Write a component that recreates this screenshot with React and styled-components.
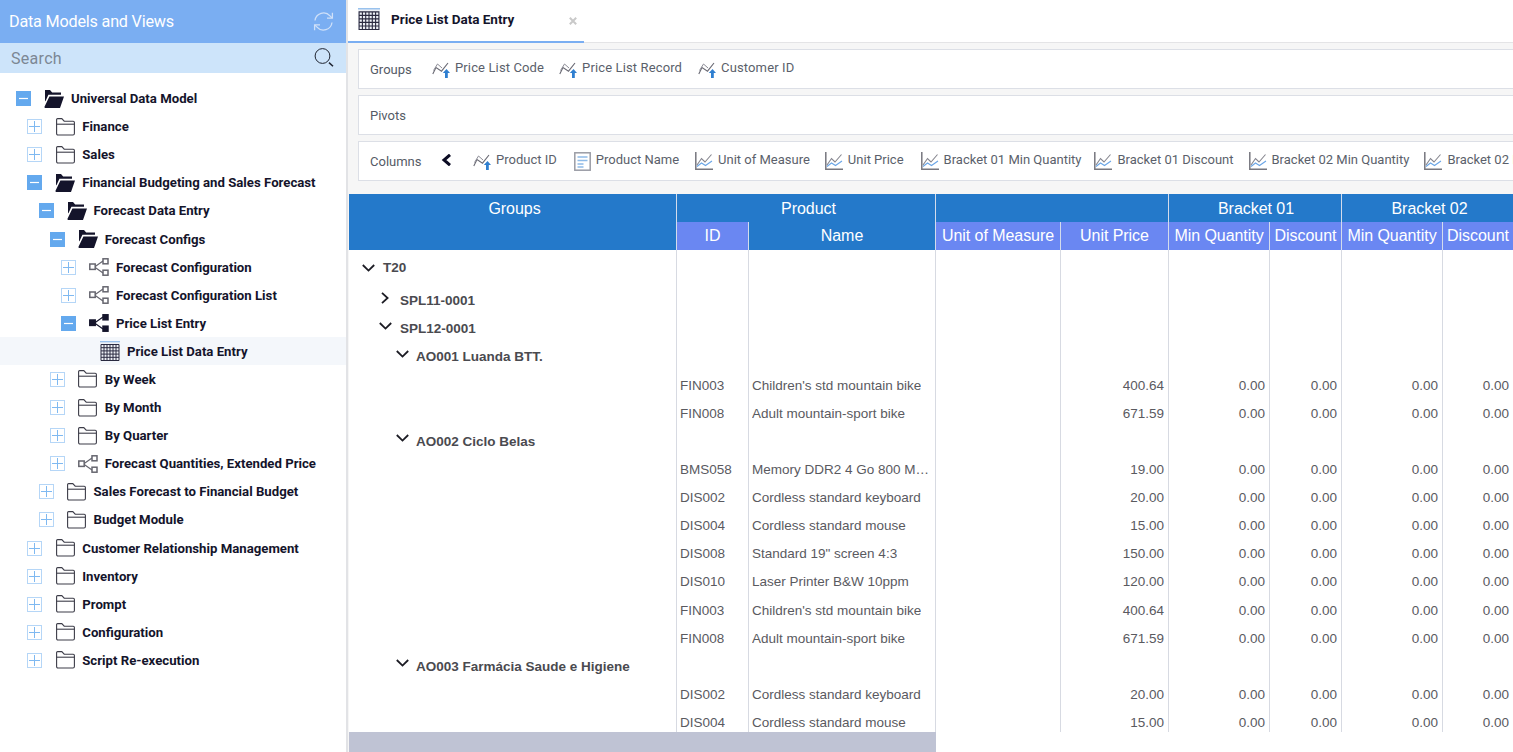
import styled, { createGlobalStyle } from 'styled-components'

const UI_FONT = `Roboto, "Liberation Sans", sans-serif`
const GRID_FONT = `"Liberation Sans", Arial, sans-serif`
const COLS = '327px 72px 187px 125px 108px 101px 72px 101px 71px'

const Global = createGlobalStyle`
  html, body { margin:0; padding:0; height:100%; overflow:hidden; background:#fff; }
  #root { height:100%; }
  * { box-sizing:border-box; }
`

/* ── Layout ── */
const Page    = styled.div`display:flex;width:1513px;height:752px;overflow:hidden;font-family:${UI_FONT};`
const Sidebar = styled.aside`width:348px;flex:none;display:flex;flex-direction:column;border-right:2px solid #e2e3e6;background:#fff;`
const Main    = styled.main`flex:1;min-width:0;display:flex;flex-direction:column;overflow:hidden;background:#f6f6f6;`

/* ── Sidebar ── */
const SideHead  = styled.div`height:43px;flex:none;display:flex;align-items:center;justify-content:space-between;padding:0 12px 1px 9px;background:#7aaef2;color:#fff;font-size:16.2px;letter-spacing:-.2px;`
const SearchBar = styled.div`height:30px;flex:none;display:flex;align-items:center;justify-content:space-between;padding:0 12px 0 11px;background:#cde4fa;`
const SearchBox = styled.input`border:0;outline:0;background:none;padding:0;width:200px;font:400 16px ${UI_FONT};letter-spacing:.3px;color:#7c8794;&::placeholder{color:#7c8794;opacity:1;}`
const Tree      = styled.div`padding-top:11.5px;display:flex;flex-direction:column;`
const TreeRow   = styled.div`
  height:28.1px;flex:none;display:flex;align-items:center;
  padding-left:${({ $level }) => 16 + $level * 11.25}px;
  background:${({ $active }) => $active ? '#f4f7fb' : 'transparent'};
`
const Toggle    = styled.span`
  width:15px;height:15px;flex:none;display:flex;align-items:center;justify-content:center;
  background:${({ $open }) => $open ? '#64a9ee' : '#fff'};
  border:${({ $open }) => $open ? '0' : '1.5px solid #b5d6f7'};
  margin-right:13px;
`
const NodeIcon  = styled.span`width:20px;height:20px;flex:none;display:flex;align-items:center;justify-content:center;margin-right:7px;`
const NodeLabel = styled.span`font-size:13.2px;font-weight:700;color:#14142b;white-space:nowrap;`

/* ── Tabs ── */
const TabBar   = styled.div`height:43px;flex:none;display:flex;background:#fff;border-bottom:1px solid #e4e4e6;`
const Tab      = styled.div`width:236px;height:43px;flex:none;display:flex;align-items:center;padding:0 0 3px 10px;border-bottom:2px solid #7aaef2;`
const TabTitle = styled.span`margin-left:11px;font-size:13.5px;font-weight:700;color:#14142b;`
const TabClose = styled.span`display:flex;margin-left:auto;margin-right:7px;padding-top:3px;`

/* ── Drop zones ── */
const Zones     = styled.div`flex:none;display:flex;flex-direction:column;gap:6px;padding:6px 0 13px 10px;`
const Zone      = styled.div`width:1200px;height:40px;display:flex;align-items:center;padding-left:11px;background:#fff;border:1px solid #dcdfe6;overflow:hidden;`
const ZoneLabel = styled.span`font-size:13px;color:#555b66;flex:none;width:${({ $w }) => $w}px;padding-top:1px;`
const Pill      = styled.span`display:flex;align-items:center;flex:none;margin-right:${({ $gap }) => $gap}px;font-size:13px;color:#5b5f6b;white-space:nowrap;letter-spacing:${({ $spaced }) => $spaced ? '.13px' : '0'};`
const PillText  = styled.span`margin-left:5px;position:relative;top:-2px;`
const Back      = styled.span`display:flex;flex:none;width:32px;margin-top:-3px;`

/* ── Grid ── */
const GridWrap  = styled.div`flex:1;min-height:0;display:flex;flex-direction:column;margin-left:1px;background:#fff;font-family:${GRID_FONT};`
const GridHead  = styled.div`flex:none;display:grid;grid-template-columns:${COLS};grid-template-rows:28px 28px;`
const HeadCell  = styled.div`
  grid-column:${({ $col }) => $col};
  grid-row:${({ $row }) => $row};
  display:flex;justify-content:center;align-items:${({ $top }) => $top ? 'flex-start' : 'center'};
  padding-top:${({ $top, $row }) => $top ? 6 : $row === '1' ? 1 : 0}px;
  padding-left:${({ $nudge }) => $nudge || 0}px;
  background:${({ $light }) => $light ? '#6a87f2' : '#2479ca'};
  border-left:${({ $first }) => $first ? '0' : '1px solid #d3dcec'};
  color:#fff;font-size:16px;letter-spacing:-.05px;white-space:nowrap;overflow:hidden;
`
const GridBody  = styled.div`flex:1;min-height:0;overflow:hidden;background:#fff;`
const Row       = styled.div`display:grid;grid-template-columns:${COLS};height:${({ $h }) => $h || 28.13}px;`
const GroupCell = styled.div`
  display:flex;align-items:center;min-width:0;white-space:nowrap;
  padding-left:${({ $indent }) => $indent}px;padding-bottom:${({ $pb }) => $pb || 0}px;
  font-size:13.5px;font-weight:700;color:#4a4a4f;
`
const Caret     = styled.span`display:flex;width:${({ $w }) => $w}px;flex:none;margin-top:${({ $raise }) => $raise ? -6 : 0}px;`
const Cell      = styled.div`
  display:flex;align-items:center;min-width:0;padding:0 ${({ $num }) => $num ? 4 : 2}px 0 3px;
  justify-content:${({ $num }) => $num ? 'flex-end' : 'flex-start'};
  border-left:1px solid #d7dae2;font-size:13.5px;color:#5a5a5f;
`
const CellText  = styled.span`display:block;white-space:nowrap;overflow:hidden;text-overflow:ellipsis;`
const ScrollBar = styled.div`flex:none;height:20px;background:#fff;`
const Thumb     = styled.div`width:587px;height:100%;background:#bfc3d4;`

/* ── Icons ── */
const Plus = () => (
  <svg width="11" height="11" viewBox="0 0 11 11"><path d="M5.5 0v11M0 5.5h11" stroke="#7fb9f1" strokeWidth="1" /></svg>
)
const Minus = () => (
  <svg width="9" height="3" viewBox="0 0 9 3"><path d="M0 1.5h9" stroke="#fff" strokeWidth="1.2" /></svg>
)
const FolderClosed = () => (
  <svg width="19" height="18" viewBox="0 0 19 18" fill="none" stroke="#3c3c48" strokeWidth="1.1">
    <path d="M.6 15.4V1.6c0-.6.4-1 1-1h4.2l2.4 2.6h9c.7 0 1.2.5 1.2 1.2v11c0 1-.6 1.6-1.4 1.6H2c-.9 0-1.4-.6-1.4-1.6z" />
    <path d="M.6 6.2h17.8" />
  </svg>
)
const FolderOpen = () => (
  <svg width="20" height="18" viewBox="0 0 20 18" fill="#14142b">
    <path d="M1 0h5l2.2 2.6H17v2.2H4.4L1.8 10.4 1 11.4z" />
    <path d="M5.4 6.4H20l-3.8 11c-.1.4-.4.6-.8.6H1.2C.6 18 .3 17.4.5 16.8z" />
  </svg>
)
const Nodes = ({ filled }) => {
  const c = filled ? '#14142b' : '#66666f'
  const fill = filled ? '#14142b' : '#fff'
  return (
    <svg width="20" height="18" viewBox="0 0 20 18" fill={fill} stroke={c} strokeWidth="1.5">
      <path d="M5.5 9 14 3M5.5 9 14 15" fill="none" strokeWidth="1.2" />
      <rect x=".8" y="6" width="5.4" height="5.4" />
      <rect x="14" y=".8" width="5" height="5" />
      <rect x="14" y="12.2" width="5" height="5" />
    </svg>
  )
}
const GridIcon = ({ size = 20 }) => (
  <svg width={size} height={size} viewBox="0 0 20 20" fill="none">
    <rect x="0" y="0" width="20" height="20" fill="#eef1f6" />
    <path d="M0 .7h20" stroke="#8fbcec" strokeWidth="1.2" />
    <path d="M1 3.5h18v16H1zM1 6.7h18M1 9.9h18M1 13.1h18M1 16.3h18M4 3.5v16M7 3.5v16M10 3.5v16M13 3.5v16M16 3.5v16" stroke="#2a2a40" strokeWidth="1" />
  </svg>
)
const Refresh = () => (
  <svg width="21" height="21" viewBox="0 0 21 21" fill="none" stroke="#cfe0f8" strokeWidth="1.3">
    <path d="M2 9.5a8.6 8.6 0 0 1 15-4.6l2 2" />
    <path d="M19.4 1.8v5.4h-5.4" />
    <path d="M19 11.5a8.6 8.6 0 0 1-15 4.6l-2-2" />
    <path d="M1.6 19.2v-5.4H7" />
  </svg>
)
const Magnifier = () => (
  <svg width="20" height="20" viewBox="0 0 20 20" fill="none" stroke="#1e2330" strokeWidth="1">
    <circle cx="8.5" cy="8" r="7.4" />
    <path d="M15 14.6l4 3.6" strokeWidth="1.5" />
  </svg>
)
const CloseX = () => (
  <svg width="8" height="8" viewBox="0 0 8 8"><path d="M.8.8l6.4 6.4M7.2.8.8 7.2" stroke="#c9c9c9" strokeWidth="2" /></svg>
)
const KeyField = () => (
  <svg width="18" height="18" viewBox="0 0 18 18" fill="none">
    <path d="M.8 14 4 7.5l5.5 3.7L16 3" stroke="#6a6a74" strokeWidth="1.1" />
    <path d="M1.5 10.5 5.5 4l4.5 4" stroke="#8c8c96" strokeWidth="1" />
    <path d="M14.5 9l3.5 4h-2.2v5h-2.8v-5H10.8z" fill="#2f7fd0" />
  </svg>
)
const DocField = () => (
  <svg width="17" height="19" viewBox="0 0 17 19" fill="none">
    <rect x=".8" y=".8" width="15.4" height="17.4" fill="#fff" stroke="#9a9ca5" strokeWidth="1.5" />
    <path d="M3.5 5h10M3.5 8.5h10M3.5 12h6M3.5 15h6" stroke="#8ebbe8" strokeWidth="1.4" />
  </svg>
)
const MeasureField = () => (
  <svg width="18" height="18" viewBox="0 0 18 18" fill="none">
    <path d="M.8 0v17.2H18" stroke="#77777f" strokeWidth="1.5" />
    <path d="M2 13l4.5-6.5 3.5 3.5L16.5 2.5" stroke="#85858e" strokeWidth="1.1" />
    <path d="M2 14.5l4.5-3.5 4 2.5 6.5-4.5" stroke="#6aa5e6" strokeWidth="1.1" />
  </svg>
)
const BackArrow = () => (
  <svg width="11" height="12" viewBox="0 0 11 12"><path d="M9 .8 3 6l6 5.2" fill="none" stroke="#0c0c24" strokeWidth="3" /></svg>
)
const CaretDown = () => (
  <svg width="13" height="8" viewBox="0 0 13 8"><path d="M.8 1l5.7 5.6L12.2 1" fill="none" stroke="#1c1c24" strokeWidth="1.8" /></svg>
)
const CaretRight = () => (
  <svg width="8" height="12" viewBox="0 0 8 12"><path d="M1 .8l5.6 5.2L1 11.2" fill="none" stroke="#1c1c24" strokeWidth="1.8" /></svg>
)

/* ── Data ── */
const tree = [
  { level:0, icon:'open', toggle:'open', label:'Universal Data Model' },
  { level:1, icon:'folder', toggle:'plus', label:'Finance' },
  { level:1, icon:'folder', toggle:'plus', label:'Sales' },
  { level:1, icon:'open', toggle:'open', label:'Financial Budgeting and Sales Forecast' },
  { level:2, icon:'open', toggle:'open', label:'Forecast Data Entry' },
  { level:3, icon:'open', toggle:'open', label:'Forecast Configs' },
  { level:4, icon:'nodes', toggle:'plus', label:'Forecast Configuration' },
  { level:4, icon:'nodes', toggle:'plus', label:'Forecast Configuration List' },
  { level:4, icon:'nodesFilled', toggle:'open', label:'Price List Entry' },
  { level:7.47, icon:'grid', label:'Price List Data Entry', active:true },
  { level:3, icon:'folder', toggle:'plus', label:'By Week' },
  { level:3, icon:'folder', toggle:'plus', label:'By Month' },
  { level:3, icon:'folder', toggle:'plus', label:'By Quarter' },
  { level:3, icon:'nodes', toggle:'plus', label:'Forecast Quantities, Extended Price' },
  { level:2, icon:'folder', toggle:'plus', label:'Sales Forecast to Financial Budget' },
  { level:2, icon:'folder', toggle:'plus', label:'Budget Module' },
  { level:1, icon:'folder', toggle:'plus', label:'Customer Relationship Management' },
  { level:1, icon:'folder', toggle:'plus', label:'Inventory' },
  { level:1, icon:'folder', toggle:'plus', label:'Prompt' },
  { level:1, icon:'folder', toggle:'plus', label:'Configuration' },
  { level:1, icon:'folder', toggle:'plus', label:'Script Re-execution' },
]

const treeIcons = {
  open: <FolderOpen />,
  folder: <FolderClosed />,
  nodes: <Nodes />,
  nodesFilled: <Nodes filled />,
  grid: <GridIcon />,
}

const fieldIcons = { key:<KeyField />, doc:<DocField />, measure:<MeasureField /> }

const groupFields = [
  { icon:'key', label:'Price List Code', gap:15, spaced:true },
  { icon:'key', label:'Price List Record', gap:16, spaced:true },
  { icon:'key', label:'Customer ID', gap:15, spaced:true },
]

const columnFields = [
  { icon:'key', label:'Product ID', gap:17 },
  { icon:'doc', label:'Product Name', gap:16 },
  { icon:'measure', label:'Unit of Measure', gap:15 },
  { icon:'measure', label:'Unit Price', gap:17 },
  { icon:'measure', label:'Bracket 01 Min Quantity', gap:13 },
  { icon:'measure', label:'Bracket 01 Discount', gap:15 },
  { icon:'measure', label:'Bracket 02 Min Quantity', gap:15 },
  { icon:'measure', label:'Bracket 02 Discount', gap:15 },
]

const bike = ['FIN003', "Children's std mountain bike", '400.64']
const sport = ['FIN008', 'Adult mountain-sport bike', '671.59']
const keyboard = ['DIS002', 'Cordless standard keyboard', '20.00']
const mouse = ['DIS004', 'Cordless standard mouse', '15.00']

const rows = [
  { group:'SPL11-0001', indent:32, caret:'right', w:19 },
  { group:'SPL12-0001', indent:30, caret:'down', w:21 },
  { group:'AO001 Luanda BTT.', indent:47, caret:'down', w:20 },
  bike, sport,
  { group:'AO002 Ciclo Belas', indent:47, caret:'down', w:20 },
  ['BMS058', 'Memory DDR2 4 Go 800 MHz CL5', '19.00'],
  keyboard, mouse,
  ['DIS008', 'Standard 19" screen 4:3', '150.00'],
  ['DIS010', 'Laser Printer B&W 10ppm', '120.00'],
  bike, sport,
  { group:'AO003 Farmácia Saude e Higiene', indent:47, caret:'down', w:20 },
  keyboard, mouse,
]

const Blanks = ({ n }) => Array.from({ length:n }, (_, i) => <Cell key={i} />)

const Field = ({ icon, label, gap, spaced }) => (
  <Pill $gap={gap} $spaced={spaced}>
    {fieldIcons[icon]}
    <PillText>{label}</PillText>
  </Pill>
)

const App = () => (
  <Page>
    <Global />

    {/* Left tree */}
    <Sidebar>
      <SideHead>
        Data Models and Views
        <Refresh />
      </SideHead>
      <SearchBar>
        <SearchBox placeholder="Search" />
        <Magnifier />
      </SearchBar>
      <Tree>
        {tree.map((n) => (
          <TreeRow key={n.label} $level={n.level} $active={n.active}>
            {n.toggle && (
              <Toggle $open={n.toggle === 'open'}>
                {n.toggle === 'open' ? <Minus /> : <Plus />}
              </Toggle>
            )}
            <NodeIcon>{treeIcons[n.icon]}</NodeIcon>
            <NodeLabel>{n.label}</NodeLabel>
          </TreeRow>
        ))}
      </Tree>
    </Sidebar>

    <Main>
      {/* Tab strip */}
      <TabBar>
        <Tab>
          <GridIcon size={22} />
          <TabTitle>Price List Data Entry</TabTitle>
          <TabClose><CloseX /></TabClose>
        </Tab>
      </TabBar>

      {/* Drop zones */}
      <Zones>
        <Zone>
          <ZoneLabel $w={62}>Groups</ZoneLabel>
          {groupFields.map((f) => <Field key={f.label} {...f} />)}
        </Zone>
        <Zone>
          <ZoneLabel $w={62}>Pivots</ZoneLabel>
        </Zone>
        <Zone>
          <ZoneLabel $w={71}>Columns</ZoneLabel>
          <Back><BackArrow /></Back>
          {columnFields.map((f) => <Field key={f.label} {...f} />)}
        </Zone>
      </Zones>

      {/* Data grid */}
      <GridWrap>
        <GridHead>
          <HeadCell $col="1" $row="1 / span 2" $first $top $nudge={4}>Groups</HeadCell>
          <HeadCell $col="2 / span 2" $row="1" $nudge={5}>Product</HeadCell>
          <HeadCell $col="4 / span 2" $row="1" />
          <HeadCell $col="6 / span 2" $row="1" $nudge={2}>Bracket 01</HeadCell>
          <HeadCell $col="8 / span 2" $row="1" $nudge={4}>Bracket 02</HeadCell>
          <HeadCell $col="2" $row="2" $light>ID</HeadCell>
          <HeadCell $col="3" $row="2">Name</HeadCell>
          <HeadCell $col="4" $row="2" $light>Unit of Measure</HeadCell>
          <HeadCell $col="5" $row="2" $light>Unit Price</HeadCell>
          <HeadCell $col="6" $row="2" $light>Min Quantity</HeadCell>
          <HeadCell $col="7" $row="2" $light>Discount</HeadCell>
          <HeadCell $col="8" $row="2" $light>Min Quantity</HeadCell>
          <HeadCell $col="9" $row="2" $light>Discount</HeadCell>
        </GridHead>
        <GridBody>
          <Row $h={36.64}>
            <GroupCell $indent={13} $pb={1}>
              <Caret $w={21}><CaretDown /></Caret>
              T20
            </GroupCell>
            <Blanks n={8} />
          </Row>
          {rows.map((r, i) => (
            r.group ? (
              <Row key={i}>
                <GroupCell $indent={r.indent}>
                  <Caret $w={r.w} $raise>
                    {r.caret === 'right' ? <CaretRight /> : <CaretDown />}
                  </Caret>
                  {r.group}
                </GroupCell>
                <Blanks n={8} />
              </Row>
            ) : (
              <Row key={i}>
                <div />
                <Cell><CellText>{r[0]}</CellText></Cell>
                <Cell><CellText>{r[1]}</CellText></Cell>
                <Cell />
                <Cell $num>{r[2]}</Cell>
                <Cell $num>0.00</Cell>
                <Cell $num>0.00</Cell>
                <Cell $num>0.00</Cell>
                <Cell $num>0.00</Cell>
              </Row>
            )
          ))}
        </GridBody>
        <ScrollBar><Thumb /></ScrollBar>
      </GridWrap>
    </Main>
  </Page>
)

export default App
